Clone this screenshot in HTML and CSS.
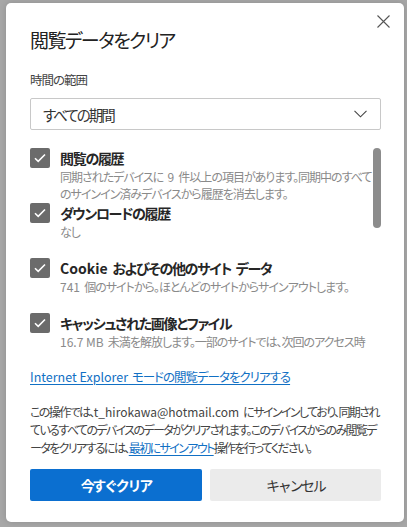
FILE: index.html
```html
<!DOCTYPE html>
<html lang="ja">
<head>
  <meta charset="UTF-8">
  <meta name="viewport" content="width=device-width, initial-scale=1.0">
  <title>閲覧データをクリア</title>
  <link rel="stylesheet" href="styles.css">
</head>
<body>
  <div class="dialog">
    <button class="close" aria-label="閉じる">
      <svg width="13" height="13" viewBox="0 0 13 13"><path d="M0.5 0.5 L12.5 12.5 M12.5 0.5 L0.5 12.5" stroke="#555" stroke-width="1.1" fill="none"/></svg>
    </button>

    <h1 class="title">閲覧データをクリア</h1>

    <div class="label">時間の範囲</div>
    <div class="select">
      <span>すべての期間</span>
      <svg class="chevron" width="13" height="8" viewBox="0 0 13 8"><path d="M0.5 0.8 L6.5 6.8 L12.5 0.8" stroke="#444" stroke-width="1.1" fill="none"/></svg>
    </div>

    <div class="scroller">
      <div class="item">
        <span class="check"><svg width="12" height="10" viewBox="0 0 12 10"><path d="M1 5.2 L4.2 8.3 L11 1.5" stroke="#fff" stroke-width="1.6" fill="none"/></svg></span>
        <div class="item-text">
          <div class="item-title">閲覧の履歴</div>
          <div class="item-desc">同期されたデバイスに <span class="latin">9</span> 件以上の項目があります。同期中のすべて<br>のサインイン済みデバイスから履歴を消去します。</div>
        </div>
      </div>
      <div class="item">
        <span class="check"><svg width="12" height="10" viewBox="0 0 12 10"><path d="M1 5.2 L4.2 8.3 L11 1.5" stroke="#fff" stroke-width="1.6" fill="none"/></svg></span>
        <div class="item-text">
          <div class="item-title">ダウンロードの履歴</div>
          <div class="item-desc">なし</div>
        </div>
      </div>
      <div class="item">
        <span class="check"><svg width="12" height="10" viewBox="0 0 12 10"><path d="M1 5.2 L4.2 8.3 L11 1.5" stroke="#fff" stroke-width="1.6" fill="none"/></svg></span>
        <div class="item-text">
          <div class="item-title"><span class="latin">Cookie</span> およびその他のサイト データ</div>
          <div class="item-desc"><span class="latin">741</span> 個のサイトから。ほとんどのサイトからサインアウトします。</div>
        </div>
      </div>
      <div class="item">
        <span class="check"><svg width="12" height="10" viewBox="0 0 12 10"><path d="M1 5.2 L4.2 8.3 L11 1.5" stroke="#fff" stroke-width="1.6" fill="none"/></svg></span>
        <div class="item-text">
          <div class="item-title">キャッシュされた画像とファイル</div>
          <div class="item-desc"><span class="latin">16.7 MB</span> 未満を解放します。一部のサイトでは、次回のアクセス時</div>
        </div>
      </div>
      <div class="scrollbar"></div>
    </div>

    <a class="ie-link" href="#"><span class="latin">Internet Explorer</span> モードの閲覧データをクリアする</a>

    <p class="note">この操作では、<span class="latin">t_hirokawa@hotmail.com</span> にサインインしており、同期され<br>ているすべてのデバイスのデータがクリアされます。このデバイスからのみ閲覧デ<br>ータをクリアするには、<a href="#">最初にサインアウト</a>操作を行ってください。</p>

    <div class="buttons">
      <button class="btn primary">今すぐクリア</button>
      <button class="btn secondary">キャンセル</button>
    </div>
  </div>
</body>
</html>
```

FILE: styles.css
```css
body {
  margin: 0;
  padding: 3px 3px 5px 6px;
  background-color: #a7a7a7;
  font-family: "Noto Sans CJK JP", "Noto Sans", sans-serif;
  font-feature-settings: "palt";
}
.dialog {
  position: relative;
  width: 398px;
  height: 519px;
  box-sizing: border-box;
  padding: 23px 23px 0 24px;
  background-color: #fff;
  border-radius: 5px;
  box-shadow: 0 0 6px rgba(0, 0, 0, 0.15);
}
.latin {
  letter-spacing: 0;
  word-spacing: 0;
}
.close {
  position: absolute;
  top: 11px;
  right: 13px;
  width: 15px;
  height: 15px;
  padding: 1px;
  border: 0;
  background: none;
}
.title {
  margin: 0;
  font-size: 19px;
  font-weight: 400;
  line-height: 28px;
  color: #222;
  letter-spacing: -1.6px;
}
.label {
  margin-top: 17px;
  font-size: 12.5px;
  line-height: 18px;
  color: #444;
  letter-spacing: -1px;
}
.select {
  margin-top: 9px;
  height: 32px;
  box-sizing: border-box;
  border: 1px solid #c8c8c8;
  border-radius: 2px;
  padding: 0 13px 0 12px;
  display: flex;
  align-items: center;
  justify-content: space-between;
  font-size: 14.5px;
  letter-spacing: -2px;
  color: #333;
}
.scroller {
  position: relative;
  height: 216px;
  margin-top: 8px;
  padding-top: 10px;
  box-sizing: border-box;
  overflow: hidden;
}
.item {
  display: flex;
  gap: 10px;
  height: 55px;
}
.check {
  flex: none;
  width: 20px;
  height: 20px;
  border-radius: 2px;
  background-color: #6b6b6b;
  display: flex;
  align-items: center;
  justify-content: center;
}
.item-title {
  font-size: 14px;
  font-weight: 600;
  line-height: 20px;
  color: #262626;
  letter-spacing: -1.3px;
  word-spacing: 3px;
  white-space: nowrap;
}
.item-desc {
  font-size: 12px;
  line-height: 17px;
  color: #8a8a8a;
  letter-spacing: -1px;
  word-spacing: 2.5px;
  white-space: nowrap;
}
.scrollbar {
  position: absolute;
  top: 10px;
  right: 0;
  width: 8px;
  height: 80px;
  border-radius: 4px;
  background-color: #8c8c8c;
}
.ie-link {
  display: block;
  margin-top: 14px;
  font-size: 12.5px;
  line-height: 18px;
  color: #1170c4;
  letter-spacing: -1px;
  word-spacing: 2px;
  text-decoration: underline;
  text-underline-offset: 2px;
}
.note {
  margin: 17px 0 0;
  font-size: 12px;
  line-height: 18px;
  color: #444;
  letter-spacing: -1.6px;
  word-spacing: 3px;
  white-space: nowrap;
}
.note a {
  color: #1170c4;
  text-underline-offset: 2px;
}
.buttons {
  display: flex;
  gap: 8px;
  margin-top: 12px;
}
.btn {
  flex: 1;
  height: 32px;
  border: 0;
  border-radius: 2px;
  font-family: inherit;
  font-size: 14px;
  letter-spacing: -2.3px;
}
.primary {
  background-color: #0b6fd0;
  color: #fff;
  font-weight: 700;
}
.secondary {
  background-color: #ebebeb;
  color: #333;
}
```
